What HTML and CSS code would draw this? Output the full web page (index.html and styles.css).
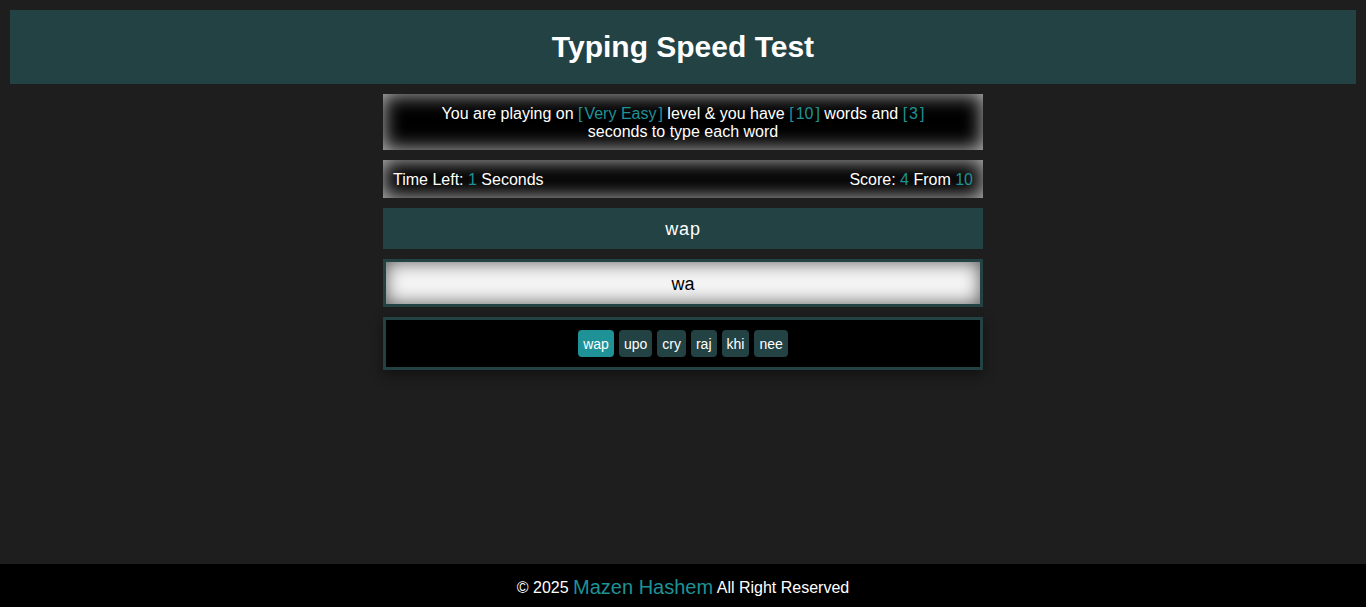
FILE: index.html
```html
<!DOCTYPE html>
<html lang="en">
<head>
<meta charset="utf-8">
<title>Typing Speed Test</title>
<link rel="stylesheet" href="styles.css">
</head>
<body>
<header class="header"><h1 class="title">Typing Speed Test</h1></header>
<main class="game">
  <div class="message">You are playing on <span class="hl">[<span class="pad">Very Easy</span>]</span> level &amp; you have <span class="hl">[<span class="pad">10</span>]</span> words and <span class="hl">[<span class="pad">3</span>]</span> seconds to type each word</div>
  <div class="control">
    <div class="time">Time Left: <span class="hl">1</span> Seconds</div>
    <div class="score">Score: <span class="hl">4</span> From <span class="hl">10</span></div>
  </div>
  <div class="the-word">wap</div>
  <input class="input" type="text" value="wa">
  <div class="upcoming">
    <span class="chip active">wap</span>
    <span class="chip">upo</span>
    <span class="chip">cry</span>
    <span class="chip">raj</span>
    <span class="chip">khi</span>
    <span class="chip">nee</span>
  </div>
</main>
<footer class="footer">© 2025 <span class="name">Mazen Hashem</span> All Right Reserved</footer>
</body>
</html>
```
FILE: styles.css
```css
* { box-sizing: border-box; }
html, body { margin: 0; height: 100%; }
body {
  background: #1e1e1e;
  color: #fff;
  font-family: "Liberation Sans", Arial, sans-serif;
  font-size: 16px;
  display: flex;
  flex-direction: column;
  min-height: 100vh;
}
.header {
  margin: 10px 10px 0;
  background: #234244;
  height: 74px;
  display: flex;
  align-items: center;
  justify-content: center;
}
.title {
  margin: 0;
  font-size: 30px;
  font-weight: bold;
}
.game {
  width: 600px;
  margin: 10px auto 0;
  display: flex;
  flex-direction: column;
  gap: 10px;
}
.hl { color: #1e9296; }
.pad { padding: 0 2px; }
.message {
  background: #000;
  box-shadow: inset 0 0 20px #c8c8c8;
  height: 56px;
  padding: 10px 40px 0;
  text-align: center;
  line-height: 18px;
}
.message, .control { padding-top: 11px; }
.control {
  background: #000;
  box-shadow: inset 0 0 20px #c8c8c8;
  height: 38px;
  padding: 11px 10px 0;
  line-height: 18px;
  display: flex;
  justify-content: space-between;
}
.the-word {
  background: #234244;
  height: 41px;
  padding-top: 2px;
  display: flex;
  align-items: center;
  justify-content: center;
  font-size: 18px;
  letter-spacing: 0.8px;
}
.input {
  display: block;
  width: 100%;
  height: 48px;
  border: 3px solid #234244;
  background: #f5f5f5;
  box-shadow: inset 0 0 18px #555;
  text-align: center;
  font-family: "Liberation Sans", Arial, sans-serif;
  font-size: 18px;
  color: #000;
  outline: none;
  padding: 3px 0 0;
}
.upcoming {
  background: #000;
  border: 3px solid #234244;
  padding: 10px;
  display: flex;
  justify-content: center;
  gap: 5px;
  box-shadow: 0 4px 12px rgba(0,0,0,0.45);
}
.chip {
  background: #234244;
  border-radius: 4px;
  padding: 1px 5px 0;
  height: 27px;
  line-height: 27px;
  font-size: 14px;
}
.chip.active { background: #1e9296; }
.footer {
  margin-top: auto;
  background: #000;
  height: 43px;
  padding-top: 4px;
  display: flex;
  align-items: center;
  justify-content: center;
  font-size: 16px;
  white-space: pre;
}
.name { color: #1e9296; font-size: 20px; }
```
